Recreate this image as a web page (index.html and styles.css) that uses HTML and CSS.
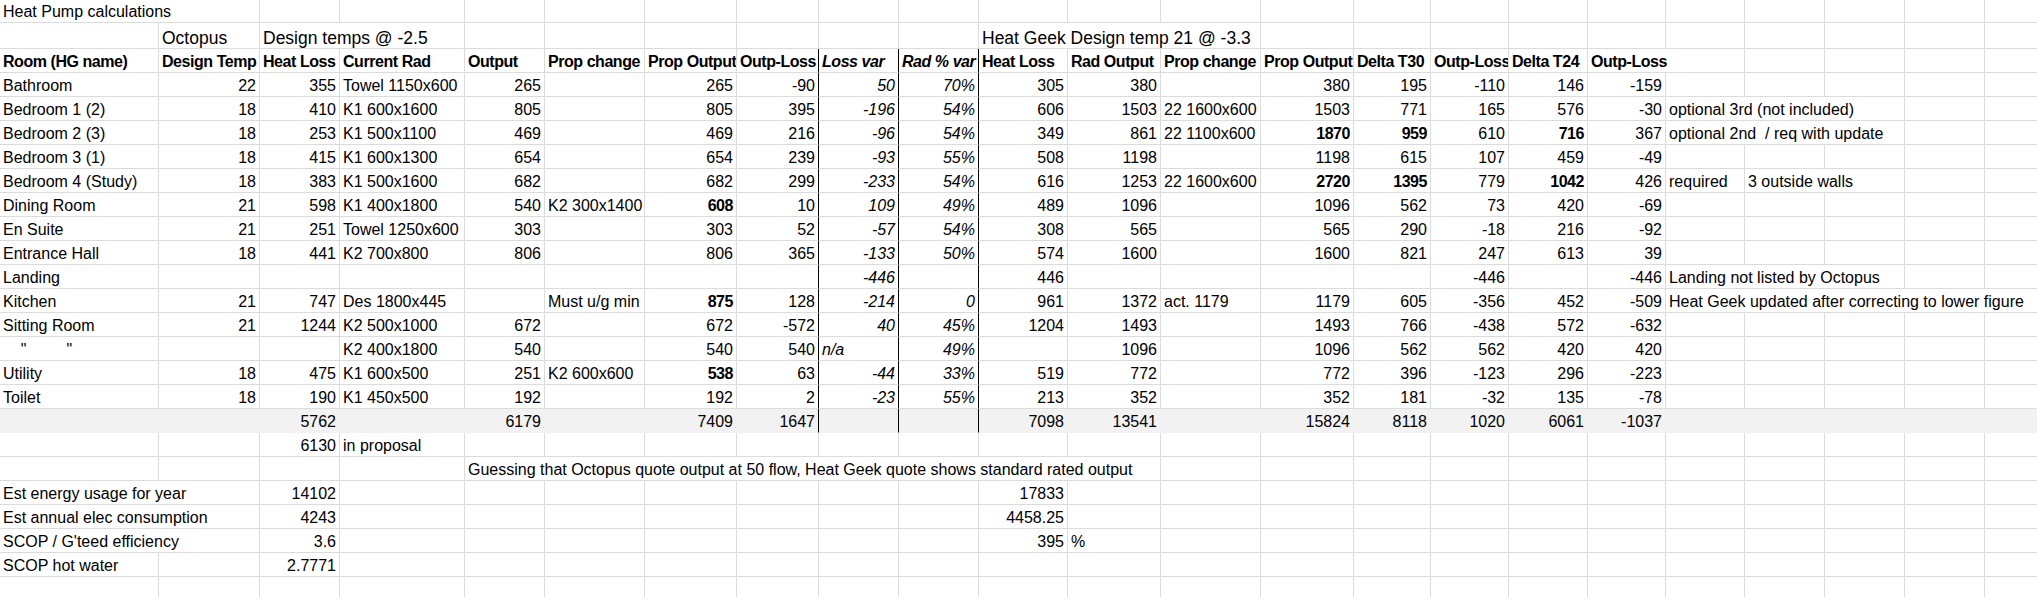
FILE: index.html
```html
<!DOCTYPE html>
<html lang="en">
<head>
<meta charset="utf-8">
<title>Heat Pump calculations</title>
<link rel="stylesheet" href="styles.css">
</head>
<body>
<div class="sheet">
<div class="r r1"><span class="s2">Heat Pump calculations</span><span></span><span></span><span></span><span></span><span></span><span></span><span></span><span></span><span></span><span></span><span></span><span></span><span></span><span></span><span></span><span></span><span></span><span></span><span></span><span></span><span></span></div>
<div class="r r2"><span></span><span>Octopus</span><span class="s2">Design temps @ -2.5</span><span></span><span></span><span></span><span></span><span></span><span></span><span class="s3">Heat Geek Design temp 21 @ -3.3</span><span></span><span></span><span></span><span></span><span></span><span></span><span></span><span></span><span></span><span></span></div>
<div class="r hd bx"><span>Room (HG name)</span><span>Design Temp</span><span>Heat Loss</span><span>Current Rad</span><span>Output</span><span>Prop change</span><span>Prop Output</span><span>Outp-Loss</span><span>Loss var</span><span>Rad % var</span><span>Heat Loss</span><span>Rad Output</span><span>Prop change</span><span>Prop Output</span><span>Delta T30</span><span>Outp-Loss</span><span>Delta T24</span><span class="s2">Outp-Loss</span><span></span><span></span><span></span><span></span></div>
<div class="r bx"><span>Bathroom</span><span class="n">22</span><span class="n">355</span><span>Towel 1150x600</span><span class="n">265</span><span></span><span class="n">265</span><span class="n">-90</span><span class="n">50</span><span class="n">70%</span><span class="n">305</span><span class="n">380</span><span></span><span class="n">380</span><span class="n">195</span><span class="n">-110</span><span class="n">146</span><span class="n">-159</span><span></span><span></span><span></span><span></span><span></span></div>
<div class="r bx"><span>Bedroom 1 (2)</span><span class="n">18</span><span class="n">410</span><span>K1 600x1600</span><span class="n">805</span><span></span><span class="n">805</span><span class="n">395</span><span class="n">-196</span><span class="n">54%</span><span class="n">606</span><span class="n">1503</span><span>22 1600x600</span><span class="n">1503</span><span class="n">771</span><span class="n">165</span><span class="n">576</span><span class="n">-30</span><span class="s3">optional 3rd (not included)</span><span></span><span></span></div>
<div class="r bx"><span>Bedroom 2 (3)</span><span class="n">18</span><span class="n">253</span><span>K1 500x1100</span><span class="n">469</span><span></span><span class="n">469</span><span class="n">216</span><span class="n">-96</span><span class="n">54%</span><span class="n">349</span><span class="n">861</span><span>22 1100x600</span><span class="n b">1870</span><span class="n b">959</span><span class="n">610</span><span class="n b">716</span><span class="n">367</span><span class="s3">optional 2nd&nbsp; / req with update</span><span></span><span></span></div>
<div class="r bx"><span>Bedroom 3 (1)</span><span class="n">18</span><span class="n">415</span><span>K1 600x1300</span><span class="n">654</span><span></span><span class="n">654</span><span class="n">239</span><span class="n">-93</span><span class="n">55%</span><span class="n">508</span><span class="n">1198</span><span></span><span class="n">1198</span><span class="n">615</span><span class="n">107</span><span class="n">459</span><span class="n">-49</span><span></span><span></span><span></span><span></span><span></span></div>
<div class="r bx"><span>Bedroom 4 (Study)</span><span class="n">18</span><span class="n">383</span><span>K1 500x1600</span><span class="n">682</span><span></span><span class="n">682</span><span class="n">299</span><span class="n">-233</span><span class="n">54%</span><span class="n">616</span><span class="n">1253</span><span>22 1600x600</span><span class="n b">2720</span><span class="n b">1395</span><span class="n">779</span><span class="n b">1042</span><span class="n">426</span><span>required</span><span class="s2">3 outside walls</span><span></span><span></span></div>
<div class="r bx"><span>Dining Room</span><span class="n">21</span><span class="n">598</span><span>K1 400x1800</span><span class="n">540</span><span>K2 300x1400</span><span class="n b">608</span><span class="n">10</span><span class="n">109</span><span class="n">49%</span><span class="n">489</span><span class="n">1096</span><span></span><span class="n">1096</span><span class="n">562</span><span class="n">73</span><span class="n">420</span><span class="n">-69</span><span></span><span></span><span></span><span></span><span></span></div>
<div class="r bx"><span>En Suite</span><span class="n">21</span><span class="n">251</span><span>Towel 1250x600</span><span class="n">303</span><span></span><span class="n">303</span><span class="n">52</span><span class="n">-57</span><span class="n">54%</span><span class="n">308</span><span class="n">565</span><span></span><span class="n">565</span><span class="n">290</span><span class="n">-18</span><span class="n">216</span><span class="n">-92</span><span></span><span></span><span></span><span></span><span></span></div>
<div class="r bx"><span>Entrance Hall</span><span class="n">18</span><span class="n">441</span><span>K2 700x800</span><span class="n">806</span><span></span><span class="n">806</span><span class="n">365</span><span class="n">-133</span><span class="n">50%</span><span class="n">574</span><span class="n">1600</span><span></span><span class="n">1600</span><span class="n">821</span><span class="n">247</span><span class="n">613</span><span class="n">39</span><span></span><span></span><span></span><span></span><span></span></div>
<div class="r bx"><span>Landing</span><span></span><span></span><span></span><span></span><span></span><span></span><span></span><span class="n">-446</span><span></span><span class="n">446</span><span></span><span></span><span></span><span></span><span class="n">-446</span><span></span><span class="n">-446</span><span class="s3">Landing not listed by Octopus</span><span></span><span></span></div>
<div class="r bx"><span>Kitchen</span><span class="n">21</span><span class="n">747</span><span>Des 1800x445</span><span></span><span>Must u/g min</span><span class="n b">875</span><span class="n">128</span><span class="n">-214</span><span class="n">0</span><span class="n">961</span><span class="n">1372</span><span>act. 1179</span><span class="n">1179</span><span class="n">605</span><span class="n">-356</span><span class="n">452</span><span class="n">-509</span><span class="s5">Heat Geek updated after correcting to lower figure</span></div>
<div class="r bx"><span>Sitting Room</span><span class="n">21</span><span class="n">1244</span><span>K2 500x1000</span><span class="n">672</span><span></span><span class="n">672</span><span class="n">-572</span><span class="n">40</span><span class="n">45%</span><span class="n">1204</span><span class="n">1493</span><span></span><span class="n">1493</span><span class="n">766</span><span class="n">-438</span><span class="n">572</span><span class="n">-632</span><span></span><span></span><span></span><span></span><span></span></div>
<div class="r bx"><span>&nbsp;&nbsp;&nbsp;&nbsp;"&nbsp;&nbsp;&nbsp;&nbsp;&nbsp;&nbsp;&nbsp;&nbsp;&nbsp;"</span><span></span><span></span><span>K2 400x1800</span><span class="n">540</span><span></span><span class="n">540</span><span class="n">540</span><span>n/a</span><span class="n">49%</span><span></span><span class="n">1096</span><span></span><span class="n">1096</span><span class="n">562</span><span class="n">562</span><span class="n">420</span><span class="n">420</span><span></span><span></span><span></span><span></span><span></span></div>
<div class="r bx"><span>Utility</span><span class="n">18</span><span class="n">475</span><span>K1 600x500</span><span class="n">251</span><span>K2 600x600</span><span class="n b">538</span><span class="n">63</span><span class="n">-44</span><span class="n">33%</span><span class="n">519</span><span class="n">772</span><span></span><span class="n">772</span><span class="n">396</span><span class="n">-123</span><span class="n">296</span><span class="n">-223</span><span></span><span></span><span></span><span></span><span></span></div>
<div class="r bx"><span>Toilet</span><span class="n">18</span><span class="n">190</span><span>K1 450x500</span><span class="n">192</span><span></span><span class="n">192</span><span class="n">2</span><span class="n">-23</span><span class="n">55%</span><span class="n">213</span><span class="n">352</span><span></span><span class="n">352</span><span class="n">181</span><span class="n">-32</span><span class="n">135</span><span class="n">-78</span><span></span><span></span><span></span><span></span><span></span></div>
<div class="r bx tot"><span></span><span></span><span class="n">5762</span><span></span><span class="n">6179</span><span></span><span class="n">7409</span><span class="n">1647</span><span></span><span></span><span class="n">7098</span><span class="n">13541</span><span></span><span class="n">15824</span><span class="n">8118</span><span class="n">1020</span><span class="n">6061</span><span class="n">-1037</span><span></span><span></span><span></span><span></span><span></span></div>
<div class="r"><span></span><span></span><span class="n">6130</span><span>in proposal</span><span></span><span></span><span></span><span></span><span></span><span></span><span></span><span></span><span></span><span></span><span></span><span></span><span></span><span></span><span></span><span></span><span></span><span></span><span></span></div>
<div class="r"><span></span><span></span><span></span><span></span><span class="s8">Guessing that Octopus quote output at 50 flow, Heat Geek quote shows standard rated output</span><span></span><span></span><span></span><span></span><span></span><span></span><span></span><span></span><span></span><span></span><span></span></div>
<div class="r"><span class="s2">Est energy usage for year</span><span class="n">14102</span><span></span><span></span><span></span><span></span><span></span><span></span><span></span><span class="n">17833</span><span></span><span></span><span></span><span></span><span></span><span></span><span></span><span></span><span></span><span></span><span></span><span></span></div>
<div class="r"><span class="s2">Est annual elec consumption</span><span class="n">4243</span><span></span><span></span><span></span><span></span><span></span><span></span><span></span><span class="n">4458.25</span><span></span><span></span><span></span><span></span><span></span><span></span><span></span><span></span><span></span><span></span><span></span><span></span></div>
<div class="r"><span class="s2">SCOP / G'teed efficiency</span><span class="n">3.6</span><span></span><span></span><span></span><span></span><span></span><span></span><span></span><span class="n">395</span><span>%</span><span></span><span></span><span></span><span></span><span></span><span></span><span></span><span></span><span></span><span></span><span></span></div>
<div class="r"><span>SCOP hot water</span><span></span><span class="n">2.7771</span><span></span><span></span><span></span><span></span><span></span><span></span><span></span><span></span><span></span><span></span><span></span><span></span><span></span><span></span><span></span><span></span><span></span><span></span><span></span><span></span></div>
<div class="r"><span></span><span></span><span></span><span></span><span></span><span></span><span></span><span></span><span></span><span></span><span></span><span></span><span></span><span></span><span></span><span></span><span></span><span></span><span></span><span></span><span></span><span></span><span></span></div>
</div>
</body>
</html>
```
FILE: styles.css
```css
html, body {
  margin: 0;
  padding: 0;
  background: #ffffff;
}

body {
  width: 2037px;
  height: 597px;
  overflow: hidden;
  font-family: "Liberation Sans", Arial, sans-serif;
  font-size: 16px;
  color: #000000;
}

.sheet {
  display: flex;
  flex-direction: column;
  width: 2065px;
}

.r {
  display: grid;
  grid-template-columns: 159px 101px 80px 125px 80px 100px 92px 82px 80px 80px 89px 93px 100px 93px 77px 78px 79px 78px 79px 80px 80px 80px 80px;
  height: 24px;
  flex: none;
}

.r > span {
  display: flex;
  align-items: flex-end;
  justify-content: flex-start;
  min-width: 0;
  overflow: hidden;
  white-space: nowrap;
  padding: 0 3px 1.5px 3px;
  border-right: 1px solid #dcdcdc;
  border-bottom: 1px solid #dcdcdc;
  line-height: 18px;
}

.r1 { height: 23px; }

.r2 { height: 26px; font-size: 17.5px; }
.r2 > span { padding-bottom: 0; line-height: 20px; }

.hd { font-weight: bold; letter-spacing: -0.45px; }

.r > .n { justify-content: flex-end; }

.b { font-weight: bold; letter-spacing: -0.45px; }

.s2 { grid-column: span 2; }
.s3 { grid-column: span 3; }
.s5 { grid-column: span 5; }
.s8 { grid-column: span 8; }

.bx > span:nth-child(9),
.bx > span:nth-child(10) {
  font-style: italic;
}

.tot { background: #f2f2f2; }
.tot > span { border-color: #f2f2f2; }

.bx > span:nth-child(8),
.bx > span:nth-child(9),
.bx > span:nth-child(10) {
  border-right-color: #000000;
}
```
